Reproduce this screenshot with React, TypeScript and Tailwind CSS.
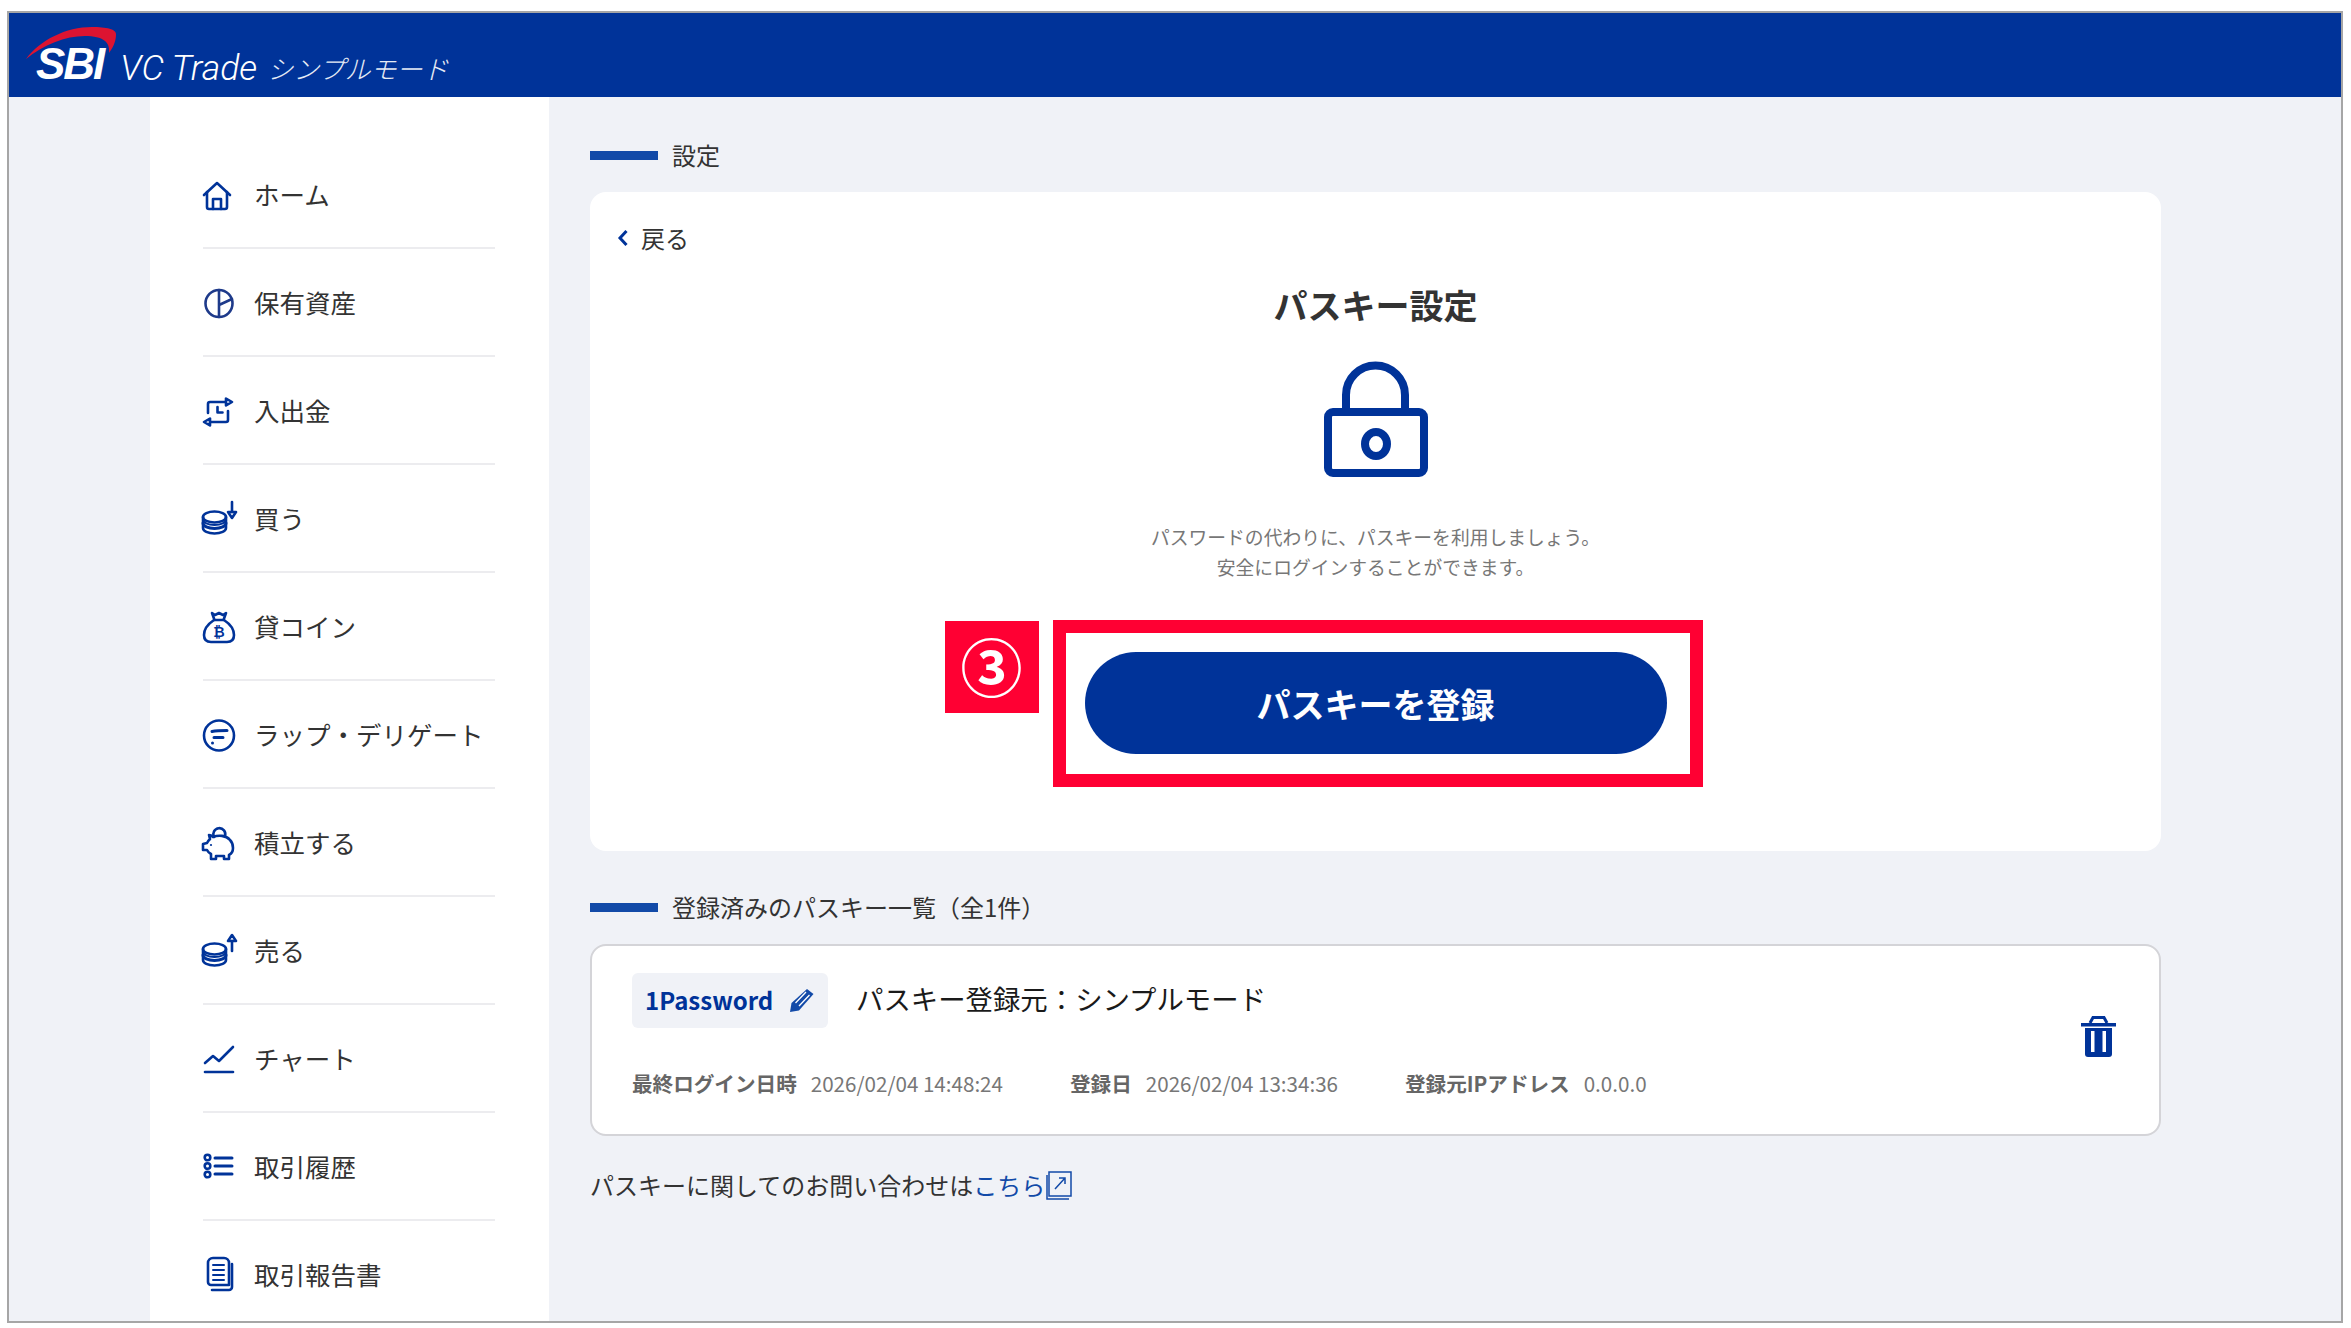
import type { ReactNode } from "react";

const NavIcon = ({ children }: { children: ReactNode }) => (
  <svg
    viewBox="0 0 40 40"
    fill="none"
    stroke="#003399"
    strokeWidth="2.6"
    strokeLinecap="round"
    strokeLinejoin="round"
    className="w-10 h-10 shrink-0 -ml-[3px] mr-[14px]"
  >
    {children}
  </svg>
);

const Coins = () => (
  <>
    <ellipse cx="14.5" cy="19" rx="11.5" ry="5.5" />
    <path d="M3 19v11c0 3 5 5.5 11.5 5.5S26 33 26 30V19" />
    <path d="M3 25c0 3 5 5.5 11.5 5.5S26 28 26 25" strokeWidth="3" />
    <path d="M3 21.5c0 3 5 5.5 11.5 5.5S26 24.5 26 21.5" strokeWidth="2" />
  </>
);

const navItems = [
  {
    label: "ホーム",
    icon: (
      <>
        <path d="M4 21 17 9l13 12" />
        <path d="M7 18v15a2 2 0 0 0 2 2h16a2 2 0 0 0 2-2V18" />
        <path d="M13 35V25h8v10" />
      </>
    ),
  },
  {
    label: "保有資産",
    icon: (
      <g stroke="#1e3a8a">
        <circle cx="19" cy="21.5" r="13.5" />
        <path d="M19 8v27M19 23l13-6" />
      </g>
    ),
  },
  {
    label: "入出金",
    icon: (
      <>
        <path d="M8 23v-9a2 2 0 0 1 2-2h16" />
        <path d="M26 8.5v7l6-3.5z" />
        <path d="M28 21v9a2 2 0 0 1-2 2H10" />
        <path d="M10 28.5v7l-6-3.5z" />
        <path d="M17.5 17v5.5h5" />
      </>
    ),
  },
  {
    label: "買う",
    icon: (
      <>
        <Coins />
        <path d="M32 4v10" />
        <path d="M28 14h8l-4 6z" />
      </>
    ),
  },
  {
    label: "貸コイン",
    icon: (
      <>
        <path d="M12 7l3 2 4-2 4 2 3-2-2.500 7h-9z" />
        <path d="M14 14C8 18 4 23 4 29c0 5 3 7 7 7h16c4 0 7-2 7-7 0-6-4-11-10-15" />
        <text
          x="19"
          y="31"
          textAnchor="middle"
          fontSize="14"
          fontWeight="700"
          fill="#003399"
          stroke="none"
          fontFamily="'Liberation Sans', sans-serif"
        >
          ₿
        </text>
      </>
    ),
  },
  {
    label: "ラップ・デリゲート",
    icon: (
      <>
        <circle cx="19" cy="21.5" r="15" />
        <path d="M12 17.500c5-1 10-1 15-1M14 23.500h9" strokeWidth="3" />
        <circle cx="12.500" cy="29" r="1.500" fill="#003399" stroke="none" />
      </>
    ),
  },
  {
    label: "積立する",
    icon: (
      <>
        <path d="M14 15a6 6 0 1 1 11-1" />
        <path d="M13 15c5-2 13-2 17 3 2 2 3 5 3 8 0 3-2 6-4 7v4h-5v-3h-8v3h-5v-5c-2-1-3-2-4-4H3v-6l4-1c1-2 2-3 3-4l-1-4c2 0 3 1 4 2z" />
        <circle cx="11" cy="23" r="1.100" fill="#003399" stroke="none" />
      </>
    ),
  },
  {
    label: "売る",
    icon: (
      <>
        <Coins />
        <path d="M32 21V11" />
        <path d="M28 11h8l-4-6z" />
      </>
    ),
  },
  {
    label: "チャート",
    icon: (
      <>
        <path d="M5 25l8-7 6 5 14-14" />
        <path d="M5 34h28" />
      </>
    ),
  },
  {
    label: "取引履歴",
    icon: (
      <>
        <circle cx="7.500" cy="11.500" r="2.800" />
        <circle cx="7.500" cy="20" r="2.800" />
        <circle cx="7.500" cy="28.500" r="2.800" />
        <path d="M15 12h17M15 20h17M15 28h17" strokeWidth="3" />
      </>
    ),
  },
  {
    label: "取引報告書",
    icon: (
      <>
        <path d="M13 4h11a5 5 0 0 1 5 5v22H11a3 3 0 0 1-3-3V9a5 5 0 0 1 5-5z" />
        <path d="M32 10v23a3 3 0 0 1-3 3H12" />
        <path d="M13 11h11M13 16h11M13 21h11M13 26h11" strokeWidth="2" />
      </>
    ),
  },
];

const SectionHeading = ({ children }: { children: ReactNode }) => (
  <div className="flex items-center h-8">
    <span className="w-[68px] h-[9px] bg-[#124aa8] mr-[14px]" />
    <span className="text-[24px] text-[#333333]">{children}</span>
  </div>
);

const Meta = ({ label, value, cls }: { label: string; value: string; cls: string }) => (
  <div className={`flex items-center ${cls}`}>
    <span className="font-bold text-[#666666] mr-[14px]">{label}</span>
    <span className="text-[#777777]">{value}</span>
  </div>
);

export default function App() {
  return (
    <div className="min-h-screen bg-white pt-[11px] pl-[7px] font-['Noto_Sans_CJK_JP','Noto_Sans',sans-serif]">
      <div className="w-[2336px] h-[1312px] border-2 border-[#a6a6a6] overflow-hidden flex flex-col bg-[#f0f2f7]">
        <header className="relative h-[84px] shrink-0 bg-[#003399] flex items-end pl-[27px] pb-[8px] text-white">
          <svg
            viewBox="0 0 92 36"
            className="absolute left-[17px] top-[13px] w-[92px] h-9"
          >
            <path
              d="M0 33C14 14 40 1 66 1c14 0 25 2 24 8 0 7-4 14-7 18 1-9-3-16-21-17C42 9 18 18 0 33z"
              fill="#dc1431"
            />
          </svg>
          <span className="font-['Liberation_Sans',sans-serif] font-bold italic text-[44px] leading-[50px] tracking-[-2px] mr-[17px]">
            SBI
          </span>
          <span className="font-['Roboto',sans-serif] font-light italic text-[35.500px] leading-[42px] mr-[10px]">
            VC Trade
          </span>
          <span className="font-light italic text-[26px] leading-[42px] text-[#e6ebf5]">
            シンプルモード
          </span>
        </header>

        <div className="flex flex-1 min-h-0">
          <nav className="ml-[141px] w-[399px] shrink-0 bg-white pt-[44px] pl-[53px] pr-[54px]">
            {navItems.map((item) => (
              <div
                key={item.label}
                className="flex items-center h-[108px] border-b-2 border-[#ececef]"
              >
                <NavIcon>{item.icon}</NavIcon>
                <span className="text-[25.5px] text-[#333333]">{item.label}</span>
              </div>
            ))}
          </nav>

          <main className="ml-[41px] w-[1571px] shrink-0 pt-[42px]">
            <SectionHeading>設定</SectionHeading>

            <section className="mt-[21px] h-[659px] bg-white rounded-2xl pt-[30px]">
              <div className="flex items-center h-8 pl-[27px]">
                <svg viewBox="0 0 12 18" className="w-3 h-[18px] mr-3">
                  <path
                    d="M9.500 2 3 9l6.500 7"
                    fill="none"
                    stroke="#003399"
                    strokeWidth="3"
                  />
                </svg>
                <span className="text-[24px] text-[#333333]">戻る</span>
              </div>

              <h1 className="mt-[28px] h-[46px] leading-[46px] text-center text-[34px] font-bold text-[#333333]">
                パスキー設定
              </h1>

              <svg viewBox="0 0 104 116" className="mt-[33px] mx-auto w-[104px] h-[116px]">
                <g fill="none" stroke="#003399" strokeWidth="8">
                  <path d="M22 48V34a29.500 29.500 0 0 1 59 0v14" />
                  <rect x="4" y="51" width="96" height="61" rx="5" />
                  <ellipse cx="52" cy="83" rx="11" ry="12" />
                </g>
              </svg>

              <p className="mt-[45px] text-center text-[18.800px] leading-[30px] text-[#777777]">
                パスワードの代わりに、パスキーを利用しましょう。
                <br />
                安全にログインすることができます。
              </p>

              <div className="relative mt-[70px] mx-auto w-[582px] h-[102px] rounded-full bg-[#003399] flex items-center justify-center text-white text-[34px] font-bold">
                パスキーを登録
                <div className="absolute -left-[32px] -top-[32px] w-[650px] h-[167px] border-[13px] border-[#ff0033]" />
                <div className="absolute -left-[140px] -top-[31px] w-[94px] h-[92px] bg-[#ff0033] flex items-center justify-center pb-[4px] text-[62px] leading-none font-bold">
                  ③
                </div>
              </div>
            </section>

            <div className="mt-[40px]">
              <SectionHeading>登録済みのパスキー一覧（全1件）</SectionHeading>
            </div>

            <section className="mt-[21px] h-[192px] bg-white border-2 border-[#d4d4d8] rounded-2xl pt-[27px] pb-[35px] pl-[40px] pr-[43px] flex items-center justify-between">
              <div>
                <div className="flex items-center h-[55px]">
                  <div className="w-[196px] h-[55px] rounded-md bg-[#f0f2f7] flex items-center pl-[13px] pb-[1px]">
                    <span className="text-[24px] font-bold text-[#003399]">1Password</span>
                    <svg viewBox="0 0 25 24" className="w-[25px] h-6 ml-[16px]">
                      <path
                        d="M18 1 24.500 6 10 22.500 1 24l1.500-9z"
                        fill="#124aa8"
                      />
                      <path
                        d="M6.500 15 17 4M10 18 20.500 7"
                        stroke="#ffffff"
                        strokeWidth="1.300"
                      />
                    </svg>
                  </div>
                  <span className="ml-[28px] pb-[4px] text-[27.400px] text-[#1a1a1a]">
                    パスキー登録元：シンプルモード
                  </span>
                </div>

                <div className="mt-[40px] mb-[1px] h-[30px] flex items-center text-[20.600px]">
                  <Meta label="最終ログイン日時" value="2026/02/04 14:48:24" cls="w-[438px]" />
                  <Meta label="登録日" value="2026/02/04 13:34:36" cls="w-[335px]" />
                  <Meta label="登録元IPアドレス" value="0.0.0.0" cls="" />
                </div>
              </div>

              <svg viewBox="0 0 35 42" className="w-[35px] h-[42px] shrink-0">
                <path
                  d="M9 8 12 2.500h11L26 8"
                  fill="none"
                  stroke="#003399"
                  strokeWidth="3"
                />
                <path d="M0 8h35v3.500H0z" fill="#003399" />
                <path
                  d="M4 13h27v26a3 3 0 0 1-3 3H7a3 3 0 0 1-3-3z"
                  fill="#003399"
                />
                <path d="M10 16h3.500v21H10zM21.500 16H25v21h-3.500z" fill="#ffffff" />
              </svg>
            </section>

            <div className="mt-[33px] h-8 flex items-center text-[24px] text-[#333333]">
              パスキーに関してのお問い合わせは
              <span className="text-[#124aa8]">こちら</span>
              <svg viewBox="0 0 26 29" className="w-[26px] h-[29px] ml-[1px] mt-[1px]">
                <g fill="none" stroke="#124aa8" strokeWidth="1.500">
                  <rect x="3" y="1" width="22" height="24" />
                  <path d="M1 4v24h22" />
                  <path d="M9 18 19 7M13 7h6v6" />
                </g>
              </svg>
            </div>
          </main>
        </div>
      </div>
    </div>
  );
}
